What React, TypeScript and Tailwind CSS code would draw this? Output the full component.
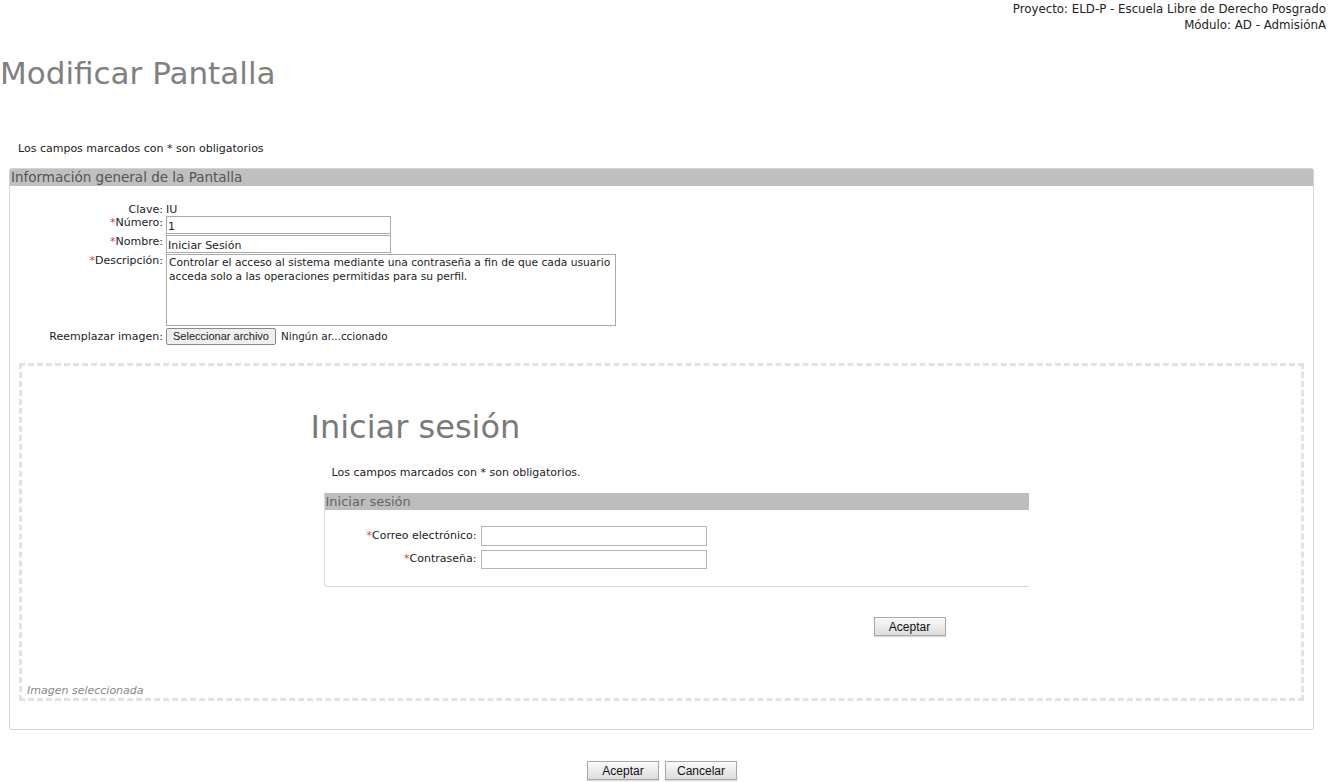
import React from 'react';

const font = { fontFamily: '"DejaVu Sans", Verdana, sans-serif' };
const btnFont = { fontFamily: '"Liberation Sans", Arial, sans-serif' };

const Req = () => <span className="text-[#e53935]">*</span>;

const Btn: React.FC<{ label: string; className?: string }> = ({ label, className = '' }) => (
  <button
    style={btnFont}
    className={`h-[19px] border border-[#a8a8a8] bg-gradient-to-b from-[#fafafa] to-[#dcdcdc] text-[12px] leading-none text-[#111] shadow-[0_1px_1px_rgba(0,0,0,0.15)] ${className}`}
  >
    {label}
  </button>
);

const LoginPreview: React.FC = () => (
  <div className="mx-auto w-[736px] pt-[44px] pb-[48px]">
    <h2 className="ml-[17px] text-[32px] leading-[34px] text-[#7a7a7a]">Iniciar sesión</h2>
    <p className="ml-[38px] mt-[22px] text-[11px] leading-[14px] text-[#222]">
      Los campos marcados con * son obligatorios.
    </p>
    <div className="ml-[30px] mr-[1px] mt-[13px] h-[94px] rounded-bl-[4px] border-b border-l border-[#d8d8d8]">
      <div className="h-[17px] bg-[#bdbdbd] pl-[1px] text-[13px] leading-[17px] text-[#666]">Iniciar sesión</div>
      <div className="mt-[16px] grid grid-cols-[152px_226px] items-center gap-x-[4px] gap-y-[4px]">
        <label className="text-right text-[11px] text-[#222]">
          <Req />Correo electrónico:
        </label>
        <input className="h-[20px] border border-[#b5b5b5] bg-white" />
        <label className="text-right text-[11px] text-[#222]">
          <Req />Contraseña:
        </label>
        <input className="h-[19px] border border-[#b5b5b5] bg-white" />
      </div>
    </div>
    <div className="mt-[30px] flex">
      <Btn label="Aceptar" className="ml-[580px] w-[72px]" />
    </div>
  </div>
);

export default function App() {
  return (
    <div className="min-h-[782px] bg-white text-[12px] text-[#222]" style={font}>
      <div className="flex flex-col items-end pr-[2px] pt-[1px] text-[11.8px] leading-[16px] text-[#222]">
        <span>Proyecto: ELD-P - Escuela Libre de Derecho Posgrado</span>
        <span>Módulo: AD - AdmisiónA</span>
      </div>

      <h1 className="mt-[22px] text-[31px] leading-[36px] text-[#808080]">Modificar Pantalla</h1>

      <p className="ml-[18px] mt-[51px] text-[11px] leading-[14px]">Los campos marcados con * son obligatorios</p>

      <section className="ml-[9px] mr-[14px] mt-[12px] h-[562px] rounded-[3px] border border-[#d4d4d4]">
        <div className="h-[17px] bg-[#bfbfbf] pl-[1px] text-[13.5px] leading-[17px] text-[#555]">
          Información general de la Pantalla
        </div>

        <div className="mt-[18px] grid grid-cols-[153px_auto] gap-x-[3px] gap-y-[1px] text-[11px]">
          <span className="text-right leading-[11px]">Clave:</span>
          <span className="leading-[11px]">IU</span>

          <span className="text-right leading-[14px]">
            <Req />Número:
          </span>
          <input
            defaultValue="1"
            className="h-[18px] w-[225px] border border-[#a9a9a9] px-[1px] pt-[2px] text-[11px]"
          />

          <span className="text-right leading-[14px]">
            <Req />Nombre:
          </span>
          <input
            defaultValue="Iniciar Sesión"
            className="h-[18px] w-[225px] border border-[#a9a9a9] px-[1px] pt-[2px] text-[11px]"
          />

          <span className="text-right leading-[14px]">
            <Req />Descripción:
          </span>
          <textarea
            defaultValue="Controlar el acceso al sistema mediante una contraseña a fin de que cada usuario acceda solo a las operaciones permitidas para su perfil."
            className="h-[72px] w-[450px] resize-none border border-[#a9a9a9] px-[2px] py-[1px] text-[10.7px] leading-[14px]"
          />

          <span className="mt-[3px] text-right leading-[14px]">Reemplazar imagen:</span>
          <div className="mt-[1px] flex items-center gap-[5px]">
            <button
              style={btnFont}
              className="h-[17px] rounded-[2px] border border-[#8a8a8a] bg-[#efefef] px-[6px] text-[11px] leading-none"
            >
              Seleccionar archivo
            </button>
            <span className="text-[10.4px]">Ningún ar...ccionado</span>
          </div>
        </div>

        <div className="mx-[9px] mt-[18px] h-[338px] border-[3px] border-dashed border-[#e2e2e2]">
          <LoginPreview />
          <p className="ml-[5px] text-[11px] italic leading-[14px] text-[#888]">Imagen seleccionada</p>
        </div>
      </section>

      <div className="mt-[31px] flex justify-center gap-[6px] pr-[4px]">
        <Btn label="Aceptar" className="w-[72px]" />
        <Btn label="Cancelar" className="w-[72px]" />
      </div>
    </div>
  );
}
